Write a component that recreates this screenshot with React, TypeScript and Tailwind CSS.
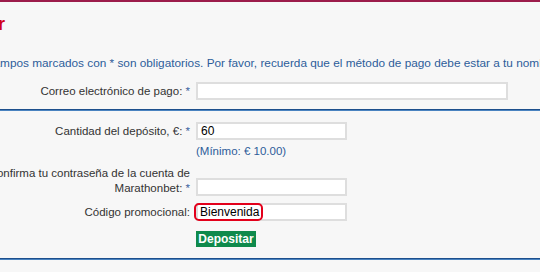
import React from "react";

function Req() {
  return <span className="text-[#3a62a0]"> *</span>;
}

export default function App() {
  return (
    <div className="w-[540px] h-[272px] overflow-hidden bg-[#f7f7f7] font-['Liberation_Sans',Arial,sans-serif] text-[11.5px] text-[#333]">
      <div className="h-[2px] bg-[#9c1c4b]" />

      {/* Title, cut at the left edge */}
      <h1 className="ml-[-78px] mt-[12px] h-[20px] text-[18px] leading-[20px] font-bold text-[#d0021b] whitespace-nowrap">
        Depositar
      </h1>

      <p className="ml-[-15px] mt-[22px] text-[11.8px] leading-[14px] whitespace-nowrap text-[#2d5d9a]">
        Campos marcados con * son obligatorios. Por favor, recuerda que el método de pago debe estar a tu nombre.
      </p>

      {/* Email */}
      <div className="mt-[12px] ml-[-16px] flex items-center">
        <label className="w-[206px] text-right leading-[14px]">
          Correo electrónico de pago:<Req />
        </label>
        <input className="ml-[6px] w-[312px] h-[18px] border-2 border-[#dedede] bg-white px-[3px] text-[12px] text-black outline-none" />
      </div>

      <div className="mt-[9px] h-[2px] border-t border-[#1d4f8c] border-b border-b-[#4a83c0]" />

      {/* Amount */}
      <div className="mt-[11px] ml-[-16px] flex items-center">
        <label className="w-[206px] text-right leading-[14px]">
          Cantidad del depósito, €:<Req />
        </label>
        <input
          defaultValue="60"
          className="ml-[6px] w-[151px] h-[18px] border-2 border-[#dedede] bg-white px-[3px] text-[12px] text-black outline-none"
        />
      </div>
      <div className="mt-[4px] ml-[196px] leading-[14px] text-[#2d5d9a]">(Mínimo: € 10.00)</div>

      {/* Password */}
      <div className="mt-[8px] ml-[-16px] flex items-end">
        <label className="w-[206px] text-right leading-[15px]">
          Confirma tu contraseña de la cuenta de Marathonbet:<Req />
        </label>
        <input
          type="password"
          className="ml-[6px] w-[151px] h-[18px] border-2 border-[#dedede] bg-white px-[3px] text-[12px] text-black outline-none"
        />
      </div>

      {/* Promo code */}
      <div className="mt-[7px] ml-[-16px] flex items-center">
        <label className="w-[206px] text-right leading-[14px]">Código promocional:</label>
        <div className="relative ml-[6px]">
          <input
            defaultValue="Bienvenida"
            className="w-[151px] h-[18px] border-2 border-[#dedede] bg-white px-[2px] text-[12px] text-black outline-none"
          />
          <div className="absolute left-[-2px] top-0 w-[69px] h-[18px] rounded-[5px] border-2 border-[#e3001b]" />
        </div>
      </div>

      <button className="mt-[10px] ml-[196px] w-[60px] h-[16px] bg-[#0f8a4c] text-white font-bold text-[12px] leading-[16px]">
        Depositar
      </button>

      <div className="mt-[9px] h-[2px] border-t border-[#1d4f8c] border-b border-b-[#4a83c0]" />
    </div>
  );
}
